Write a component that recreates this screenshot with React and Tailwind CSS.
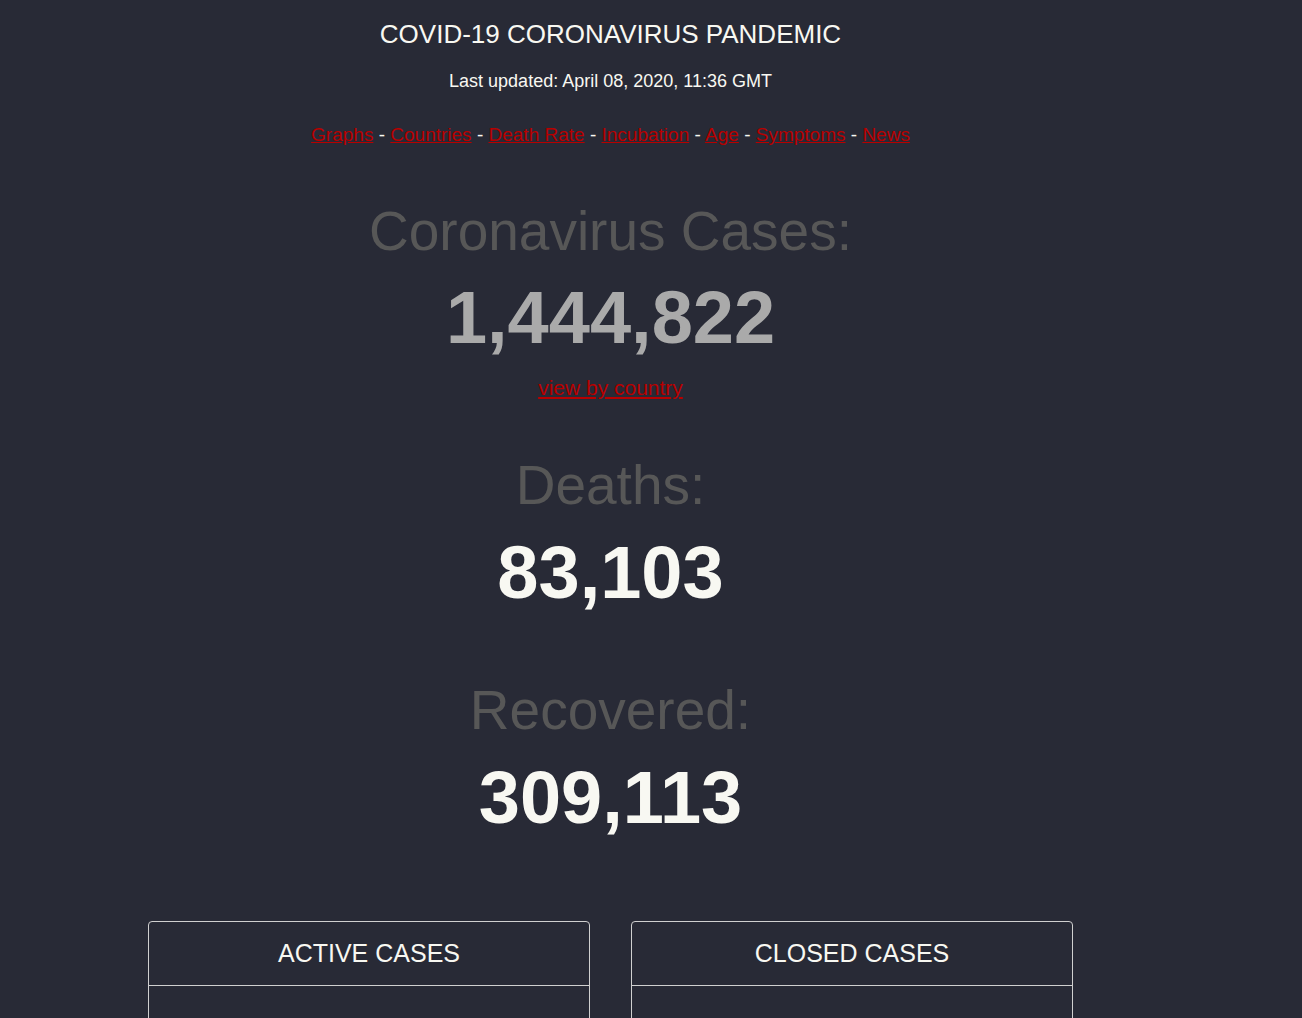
export default function App() {
    const links = ["Graphs", "Countries", "Death Rate", "Incubation", "Age", "Symptoms", "News"];

    return (
        <div className="min-h-screen bg-[#282a36] font-['Liberation_Sans',Arial,sans-serif] text-[#f8f8f2] overflow-hidden">
            <div className="w-[1221px] text-center">
                {/* Header */}
                <h1 className="pt-[19px] text-[26px] leading-[30px]">COVID-19 CORONAVIRUS PANDEMIC</h1>
                <div className="mt-[22px] text-[18px] leading-[20px]">Last updated: April 08, 2020, 11:36 GMT</div>
                <div className="mt-[33px] text-[19px] leading-[22px]">
                    {links.map((l, i) => (
                        <span key={l}>
                            <a href="#" className="text-[#b80000] underline">{l}</a>
                            {i < links.length - 1 && " - "}
                        </span>
                    ))}
                </div>

                {/* Main counters */}
                <div className="mt-[53px]">
                    <h2 className="text-[55px] leading-[64px] text-[#575757]">Coronavirus Cases:</h2>
                    <div className="mt-[13px] text-[74px] leading-[84px] font-bold text-[#aaaaaa]">1,444,822</div>
                    <a href="#" className="inline-block mt-[16px] text-[21px] leading-[24px] text-[#b80000] underline">view by country</a>
                </div>

                <div className="mt-[51px]">
                    <h2 className="text-[55px] leading-[64px] text-[#575757]">Deaths:</h2>
                    <div className="mt-[14px] text-[74px] leading-[84px] font-bold text-[#f8f8f2]">83,103</div>
                </div>

                <div className="mt-[63px]">
                    <h2 className="text-[55px] leading-[64px] text-[#575757]">Recovered:</h2>
                    <div className="mt-[14px] text-[74px] leading-[84px] font-bold text-[#f8f8f2]">309,113</div>
                </div>

                {/* Cards */}
                <div className="mt-[81px] flex justify-center gap-[41px]">
                    {["ACTIVE CASES", "CLOSED CASES"].map((t) => (
                        <div key={t} className="w-[442px] h-[200px] border border-[#d0d0d0] rounded-[4px]">
                            <div className="h-[64px] flex items-center justify-center border-b border-[#d0d0d0] text-[25px]">{t}</div>
                        </div>
                    ))}
                </div>
            </div>
        </div>
    );
}
